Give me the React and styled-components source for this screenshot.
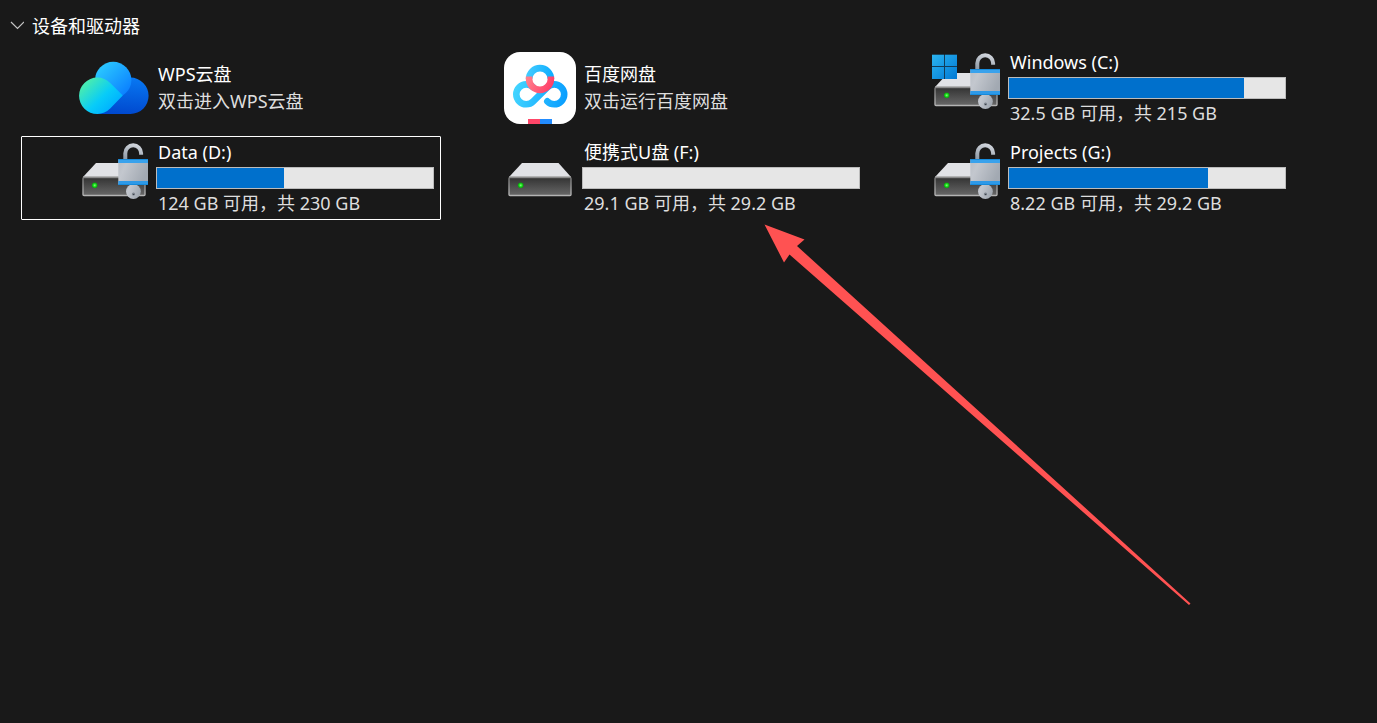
import React, { useId, useState } from "react";
import styled, { createGlobalStyle } from "styled-components";

const GlobalStyle = createGlobalStyle`
  * { box-sizing: border-box; }
  body {
    margin: 0;
    background: #191919;
    color: #ffffff;
    font: 18px/27px "Noto Sans", "Noto Sans CJK SC", sans-serif;
  }
  button { font: inherit; color: inherit; }
`;

const Page = styled.main`
  position: relative;
  min-height: 100vh;
  padding-top: 13px;
  overflow: hidden;
`;

const GroupHeader = styled.h1`
  margin: 0;
  padding-left: 10px;
  font: inherit;
`;

const GroupToggle = styled.button`
  display: flex;
  align-items: center;
  gap: 8px;
  padding: 0;
  border: 0;
  background: none;
  line-height: 27px;
`;

const Chevron = styled.svg`
  width: 14px;
  height: 14px;
  transform: ${(p) => (p.$open ? "none" : "rotate(-90deg)")};
`;

const DriveGrid = styled.ul`
  display: grid;
  grid-template-columns: repeat(auto-fill, 420px);
  gap: 6px;
  margin: 0;
  padding: 6px 21px;
  list-style: none;
`;

const Tile = styled.button`
  display: flex;
  align-items: center;
  gap: 6px;
  width: 100%;
  height: 84px;
  padding: 0 6px 0 56px;
  border: 1px solid ${(p) => (p.$selected ? "#ffffff" : "transparent")};
  border-radius: 1px;
  background: none;
  text-align: left;
`;

const TileIcon = styled.svg`
  flex: none;
  width: 72px;
  height: 72px;
`;

const TileBody = styled.span`
  display: flex;
  flex: 1;
  flex-direction: column;
  min-width: 0;
`;

const Name = styled.span`
  padding-left: 2px;
  white-space: nowrap;
`;

const Detail = styled(Name)`
  color: #dedede;
`;

const Capacity = styled.progress`
  display: block;
  width: 100%;
  height: 22px;
  margin: 1px 0;
  border: 1px solid #bcbcbc;
  background: #e6e6e6;
  appearance: none;

  &::-webkit-progress-bar { background: #e6e6e6; }
  &::-webkit-progress-value { background: #0070cc; }
  &::-moz-progress-bar { background: #0070cc; }
`;

const Pointer = styled.svg`
  position: absolute;
  top: 224px;
  left: 764px;
  width: 428px;
  height: 382px;
  pointer-events: none;
`;

function WpsIcon() {
  const id = useId();
  return (
    <TileIcon viewBox="0 0 72 72" aria-hidden="true">
      <defs>
        <linearGradient id={id + "t"} x1="0.1" y1="0.1" x2="0.9" y2="0.9">
          <stop offset="0" stopColor="#2ccbff" />
          <stop offset="1" stopColor="#0a7dff" />
        </linearGradient>
        <linearGradient id={id + "l"} x1="0.1" y1="0.25" x2="0.75" y2="0.8">
          <stop offset="0" stopColor="#45eab4" />
          <stop offset="0.6" stopColor="#08ccf8" />
          <stop offset="1" stopColor="#00b4ff" />
        </linearGradient>
        <linearGradient id={id + "r"} x1="0.7" y1="0" x2="0.6" y2="1">
          <stop offset="0" stopColor="#0878f2" />
          <stop offset="1" stopColor="#0049cf" />
        </linearGradient>
      </defs>
      <path d="M19 62L44 38Q44 26 52.4 25.6A18.2 18.2 0 0 1 52.4 62Z" fill={`url(#${id}r)`} />
      <circle cx="35.2" cy="28" r="18.2" fill={`url(#${id}t)`} />
      <path d="M44.8 43.6L32.2 31A18.2 18.2 0 1 0 32.2 56.6Z" fill={`url(#${id}l)`} />
    </TileIcon>
  );
}

function BaiduIcon() {
  const id = useId();
  return (
    <TileIcon viewBox="0 0 72 72" aria-hidden="true">
      <defs>
        <linearGradient id={id + "b"} gradientUnits="userSpaceOnUse" x1="9" y1="36" x2="64" y2="48">
          <stop offset="0" stopColor="#44d6ff" />
          <stop offset="1" stopColor="#079cff" />
        </linearGradient>
        <linearGradient id={id + "c"} gradientUnits="userSpaceOnUse" x1="22" y1="24" x2="50" y2="26">
          <stop offset="0" stopColor="#44ccff" />
          <stop offset="1" stopColor="#0bacff" />
        </linearGradient>
        <linearGradient id={id + "p"} gradientUnits="userSpaceOnUse" x1="24" y1="26" x2="48" y2="36">
          <stop offset="0" stopColor="#ff7d8b" />
          <stop offset="1" stopColor="#ff3d68" />
        </linearGradient>
      </defs>
      <rect width="72" height="72" rx="16" fill="#ffffff" />
      <g fill="none" strokeWidth="6.6">
        <path
          d="M43.3 49.3A9.9 9.9 0 1 0 43.3 35.3L29.2 49.3A9.9 9.9 0 1 1 29.2 35.3"
          stroke={`url(#${id}b)`}
          strokeLinecap="round"
        />
        <path d="M25.1 26V27A10.9 10.9 0 0 1 46.9 27V26" stroke={`url(#${id}c)`} />
        <path d="M25.1 24.5V27A10.9 10.9 0 0 0 46.9 27V24.5" stroke={`url(#${id}p)`} />
      </g>
      <path d="M24 67H36V72H24Z" fill="#ff4668" />
      <path d="M36 67H48V72H36Z" fill="#228cff" />
    </TileIcon>
  );
}

function DiskIcon({ locked, system }) {
  const id = useId();
  return (
    <TileIcon viewBox="0 0 72 72" aria-hidden="true">
      <defs>
        <linearGradient id={id + "f"} x1="0" y1="0" x2="0" y2="1">
          <stop offset="0" stopColor="#333333" />
          <stop offset="1" stopColor="#686868" />
        </linearGradient>
        <linearGradient id={id + "e"} x1="0" y1="0" x2="0" y2="1">
          <stop offset="0" stopColor="#777777" />
          <stop offset="1" stopColor="#b4b4b4" />
        </linearGradient>
        <radialGradient id={id + "g"}>
          <stop offset="0" stopColor="#8aff7e" />
          <stop offset="0.5" stopColor="#20e020" />
          <stop offset="1" stopColor="#069d0b" />
        </radialGradient>
        <linearGradient id={id + "m"} x1="0" y1="0" x2="1" y2="0.4">
          <stop offset="0" stopColor="#b9bec6" />
          <stop offset="0.3" stopColor="#c3c7ce" />
          <stop offset="1" stopColor="#a2a9b2" />
        </linearGradient>
        <linearGradient id={id + "s"} gradientUnits="userSpaceOnUse" x1="56" y1="2" x2="52" y2="17">
          <stop offset="0" stopColor="#d0d5dc" />
          <stop offset="1" stopColor="#939eaa" />
        </linearGradient>
        <linearGradient id={id + "w"} x1="0" y1="0" x2="1" y2="1">
          <stop offset="0" stopColor="#2bb4f0" />
          <stop offset="1" stopColor="#0078d4" />
        </linearGradient>
      </defs>
      <path d="M18 21H54.5L67 35H5Z" fill="#e1e2e6" />
      <rect x="5" y="35.5" width="62" height="18" rx="1" fill={`url(#${id}f)`} stroke={`url(#${id}e)`} strokeWidth="1.4" />
      <path d="M5 35H67" stroke="#a0a0a0" strokeWidth="1" />
      <circle cx="16.7" cy="43.3" r="2.8" fill={`url(#${id}g)`} />
      {locked && (
        <g>
          <path d="M47.3 18V11.2A7.9 7.9 0 0 1 63.1 11.2V12.8" fill="none" stroke={`url(#${id}s)`} strokeWidth="4" />
          <circle cx="55.4" cy="49.5" r="7.4" fill={`url(#${id}m)`} />
          <rect x="40.3" y="17" width="29.7" height="26" rx="1" fill={`url(#${id}m)`} />
          <path d="M41.3 17H69Q70 17 70 18V21H40.3V18Q40.3 17 41.3 17Z" fill="#39a2ec" />
          <path d="M40.3 39H70V42Q70 43 69 43H41.3Q40.3 43 40.3 42Z" fill="#2e99e7" />
          <path d="M40.3 17.5H70M40.3 42.5H70" stroke="#168bdd" strokeWidth="1" />
          <circle cx="55.5" cy="52" r="1.6" fill="#7a818b" />
          <path d="M55 52.5H56.2" stroke="#3f454c" strokeWidth="1" />
        </g>
      )}
      {system && (
        <g>
          <rect x="2" y="2.7" width="25" height="24.3" fill="#123c59" />
          <path
            d="M2 2.7H14V14H2ZM15 2.7H27V14H15ZM2 15H14V27H2ZM15 15H27V27H15Z"
            fill={`url(#${id}w)`}
          />
        </g>
      )}
    </TileIcon>
  );
}

const drives = [
  { id: "wps", name: "WPS云盘", detail: "双击进入WPS云盘", icon: <WpsIcon /> },
  { id: "baidu", name: "百度网盘", detail: "双击运行百度网盘", icon: <BaiduIcon /> },
  { id: "c", name: "Windows (C:)", detail: "32.5 GB 可用，共 215 GB", used: 85, icon: <DiskIcon locked system /> },
  { id: "d", name: "Data (D:)", detail: "124 GB 可用，共 230 GB", used: 46, icon: <DiskIcon locked /> },
  { id: "f", name: "便携式U盘 (F:)", detail: "29.1 GB 可用，共 29.2 GB", used: 0, icon: <DiskIcon /> },
  { id: "g", name: "Projects (G:)", detail: "8.22 GB 可用，共 29.2 GB", used: 72, icon: <DiskIcon locked /> },
];

function DriveTile({ drive, selected, onSelect }) {
  return (
    <li>
      <Tile type="button" $selected={selected} aria-pressed={selected} onClick={onSelect}>
        {drive.icon}
        <TileBody>
          <Name>{drive.name}</Name>
          {drive.used !== undefined && <Capacity max="100" value={drive.used} aria-label={drive.name} />}
          <Detail>{drive.detail}</Detail>
        </TileBody>
      </Tile>
    </li>
  );
}

export default function App() {
  const [open, setOpen] = useState(true);
  const [selected, setSelected] = useState("d");
  return (
    <Page>
      <GlobalStyle />
      <GroupHeader>
        <GroupToggle type="button" aria-expanded={open} onClick={() => setOpen(!open)}>
          <Chevron $open={open} viewBox="0 0 14 14" aria-hidden="true">
            <path d="M1 2L7.5 8.5L14 2" fill="none" stroke="#c4c4c4" strokeWidth="1.2" />
          </Chevron>
          设备和驱动器
        </GroupToggle>
      </GroupHeader>
      {open && (
        <DriveGrid>
          {drives.map((drive) => (
            <DriveTile
              key={drive.id}
              drive={drive}
              selected={drive.id === selected}
              onSelect={() => setSelected(drive.id)}
            />
          ))}
        </DriveGrid>
      )}
      <Pointer viewBox="764 224 428 382" aria-hidden="true">
        <path d="M764.5 224.5L804.5 239.5L797 246L1190.5 603.5L1189 605L789.5 254.5L784 262.5Z" fill="#ff5252" />
      </Pointer>
    </Page>
  );
}
